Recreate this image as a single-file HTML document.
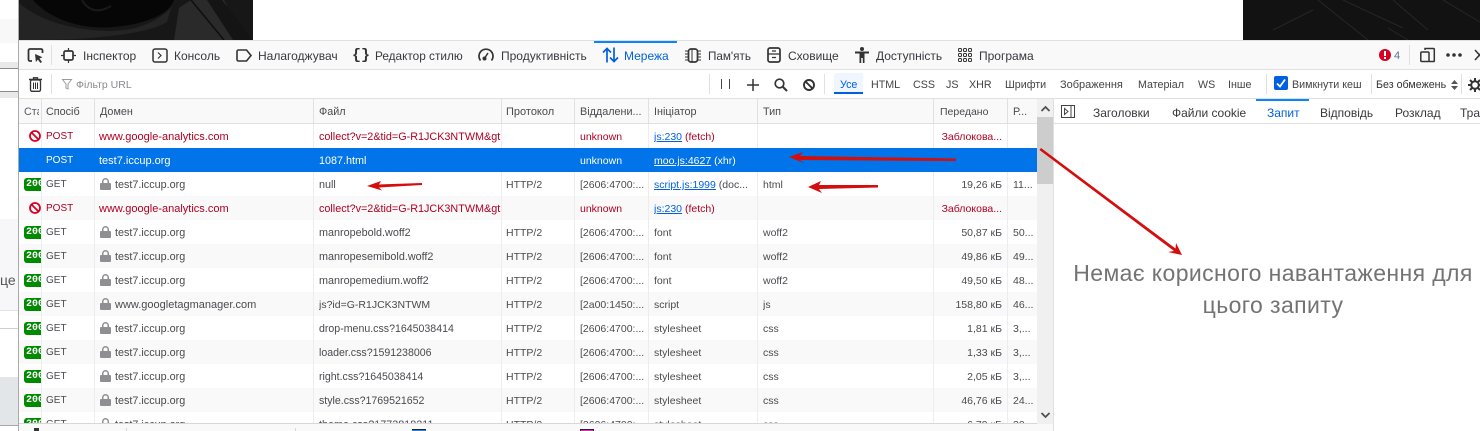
<!DOCTYPE html>
<html lang="uk"><head><meta charset="utf-8"><title>Мережа</title>
<style>
html,body{margin:0;padding:0;width:1480px;height:431px;overflow:hidden;background:#fff}
body{position:relative;font:12px "Liberation Sans","Noto Sans CJK SC",sans-serif;color:#38383d}
.a{position:absolute}
svg{position:absolute;overflow:visible}
.t{position:absolute;white-space:nowrap;top:41px;height:28px;line-height:31px;font-size:12px;color:#38383d}
.f{position:absolute;white-space:nowrap;top:70px;height:28px;line-height:31px;font-size:10.7px;color:#444}
.h{position:absolute;white-space:nowrap;top:99px;height:24px;line-height:27px;font-size:10.8px;color:#4a4a4f}
.p{position:absolute;white-space:nowrap;top:99px;height:24px;line-height:28px;font-size:12px;color:#38383d}
.r{position:absolute;left:0;width:1018px;height:24px;line-height:26px;font-size:10.5px;color:#4a4a4f}
.r span{position:absolute;white-space:nowrap;overflow:hidden;top:0}
.r u{color:#0060df}
.e,.e u{color:#b00020}.e u{color:#0060df}
.s,.s u{color:#fff}
.g{background:#f9f9fa}
.m{left:27px;font-size:10px}.d{left:80px;width:210px;font-size:11px}.dl{left:96px;width:195px;font-size:10.8px}.n{left:300px;width:182px;font-size:10.8px}.o{left:487px}.q{left:561px;width:70px}.i{left:635px;width:104px}.y{left:744px}.x{left:850px;width:133px;text-align:right}.z{left:994px;width:24px}
.b{position:absolute;left:5px;top:6px;width:17px;height:13px;background:#008a00;border-radius:3px 0 0 3px;overflow:hidden;color:#fff;font:bold 10px/13px "Liberation Mono",monospace;padding-left:2px;box-sizing:border-box}
.l{position:absolute;left:81px;top:6px;width:11px;height:12px}
.v{position:absolute;top:0;width:1px;height:300px;background:#ededf0}
</style></head><body>

<!-- left page sliver -->
<div class="a" style="left:0;top:19px;width:18px;height:24px;background:#f8f8f8"></div>
<div class="a" style="left:0;top:62px;width:18px;height:6px;background:#e9e9e9"></div>
<div class="a" style="left:0;top:68px;width:18px;height:1px;background:#8a8a8a"></div>
<div class="a" style="left:0;top:91px;width:18px;height:1px;background:#8a8a8a"></div>
<div class="a" style="left:0;top:92px;width:18px;height:6px;background:#e9e9e9"></div>
<div class="a" style="left:0;top:219px;width:18px;height:91px;background:#f7f7f9"></div>
<div class="a" style="left:0;top:310px;width:18px;height:1px;background:#e3e3e3"></div>
<div class="a" style="left:0;top:328px;width:18px;height:1px;background:#cfcfcf"></div>
<div class="a" style="left:0;top:377px;width:18px;height:48px;background:#e3e6e9"></div>
<div class="a" style="left:0;top:425px;width:18px;height:1px;background:#a8a8a8"></div>
<div class="a" style="left:0;top:270px;font-size:14px;line-height:20px;color:#555;white-space:nowrap">це</div>
<div class="a" style="left:18px;top:0;width:1px;height:431px;background:#a9a9a9"></div>

<!-- dark images -->
<svg style="left:19px;top:0" width="234" height="40" viewBox="0 0 234 40">
<rect width="234" height="40" fill="#171717"/>
<path d="M0 0H155C150 14 128 24 95 27C60 30 30 18 14 0Z" fill="#060606"/>
<path d="M0 3C20 20 50 30 90 31C120 31 140 20 152 8L148 22C125 36 60 40 20 40H0Z" fill="#242424"/>
<path d="M160 8L172 0H205L225 40H155Z" fill="#2a2a2a"/>
<path d="M172 0L205 40" stroke="#0e0e0e" stroke-width="1.500" fill="none"/>
<path d="M203 0L234 40H214L188 0Z" fill="#141414"/>
<path d="M63 0C70 12 80 13 92 6" stroke="#1a1a1a" stroke-width="2" fill="none"/>
</svg>
<svg style="left:1243px;top:0" width="237" height="40" viewBox="0 0 237 40">
<rect width="237" height="40" fill="#121212"/>
<path d="M75 0L125 40M100 0L160 28M150 0L185 30M200 0L237 22M145 28L165 40M30 30L70 10" stroke="#262626" stroke-width="1" fill="none"/>
</svg>

<!-- toolbar backgrounds -->
<div class="a" style="left:19px;top:40px;width:1461px;height:1px;background:#e0e0e1"></div>
<div class="a" style="left:19px;top:41px;width:1461px;height:28px;background:#f9f9fa"></div>
<div class="a" style="left:19px;top:69px;width:1461px;height:1px;background:#e0e0e1"></div>
<div class="a" style="left:19px;top:70px;width:1461px;height:28px;background:#fff"></div>
<div class="a" style="left:19px;top:98px;width:1461px;height:1px;background:#e0e0e1"></div>
<div class="a" style="left:19px;top:99px;width:1018px;height:24px;background:#f9f9fa"></div>
<div class="a" style="left:19px;top:123px;width:1018px;height:1px;background:#e0e0e1"></div>
<div class="a" style="left:1054px;top:123px;width:426px;height:1px;background:#e0e0e1"></div>

<!-- top tabs icons -->
<svg style="left:27px;top:47px" width="18" height="18" viewBox="0 0 18 18" fill="none" stroke="#333" stroke-width="1.800"><path d="M5 14H3a1.500 1.500 0 0 1-1.500-1.500V3.500A1.500 1.500 0 0 1 3 2h11a1.500 1.500 0 0 1 1.500 1.500V6"/><path d="M8 7l7.500 3.200-3 1.300 2.500 3.500-1.600 1-2.500-3.400-2 2.400Z" fill="#333" stroke="none"/></svg>
<div class="a" style="left:51px;top:45px;width:1px;height:20px;background:#e0e0e1"></div>
<svg style="left:61px;top:48px" width="15" height="15" viewBox="0 0 15 15" fill="none" stroke="#333" stroke-width="1.700"><rect x="3" y="3" width="9" height="9" rx="1.500"/><path d="M7.500 0V3M7.500 12V15M0 7.500H3M12 7.500H15" stroke-width="1.200"/></svg>
<div class="t" style="left:83px">Інспектор</div>
<svg style="left:152px;top:48px" width="16" height="15" viewBox="0 0 16 15" fill="none" stroke="#333" stroke-width="1.500"><rect x="1" y="1" width="14" height="13" rx="2"/><path d="M6 4.500L9 7.500L6 10.500" stroke-width="1.200"/></svg>
<div class="t" style="left:174px">Консоль</div>
<svg style="left:236px;top:49px" width="16" height="13" viewBox="0 0 16 13" fill="none" stroke="#333" stroke-width="1.600"><path d="M2.500 1H10.500L15 6.500L10.500 12H2.500A1.500 1.500 0 0 1 1 10.500V2.500A1.500 1.500 0 0 1 2.500 1Z"/></svg>
<div class="t" style="left:258px">Налагоджувач</div>
<div class="a" style="left:352px;top:47px;font:bold 15px/17px 'Liberation Mono',monospace;color:#333">{</div>
<div class="a" style="left:361px;top:47px;font:bold 15px/17px 'Liberation Mono',monospace;color:#333">}</div>
<div class="t" style="left:375px;font-size:11.800px">Редактор стилю</div>
<svg style="left:478px;top:47px" width="16" height="15" viewBox="0 0 16 15" fill="none" stroke="#333" stroke-width="1.700"><path d="M2.500 13.500A7 7 0 1 1 13.500 13.500"/><path d="M6 12L10 6" stroke-width="1.500"/><circle cx="6.500" cy="11.500" r="2" fill="#333" stroke="none"/></svg>
<div class="t" style="left:501px">Продуктивність</div>
<div class="a" style="left:594px;top:41px;width:83px;height:2px;background:#0a84ff"></div>
<svg style="left:602px;top:47px" width="17" height="16" viewBox="0 0 17 16" fill="none" stroke="#0060df" stroke-width="1.700"><path d="M5 15.500V1.500M1 5.500L5 1.500L9 5.500"/><path d="M12 .5V14.500M8 10.500L12 14.500L16 10.500"/></svg>
<div class="t" style="left:624px;color:#0060df">Мережа</div>
<svg style="left:685px;top:48px" width="16" height="15" viewBox="0 0 16 15" fill="none" stroke="#333"><rect x="3.500" y="1" width="9" height="13" rx="2.500" stroke-width="1.700"/><path d="M0 3H3M0 6H3M0 9H3M0 12H3M13 3H16M13 6H16M13 9H16M13 12H16" stroke-width="1"/><path d="M7 1V14" stroke-width="1"/></svg>
<div class="t" style="left:708px;font-size:11.700px">Пам'ять</div>
<svg style="left:767px;top:47px" width="14" height="16" viewBox="0 0 14 16" fill="none" stroke="#333" stroke-width="1.700"><rect x="1" y="1" width="12" height="14" rx="2"/><path d="M1 7H13M5 4H9M5 10.500H9" stroke-width="1.200"/></svg>
<div class="t" style="left:788px">Сховище</div>
<svg style="left:855px;top:47px" width="14" height="16" viewBox="0 0 14 16" fill="#333"><circle cx="7" cy="2" r="2"/><path d="M0 4.500H14V6.500H9.500V16H7.800V11H6.200V16H4.500V6.500H0Z"/></svg>
<div class="t" style="left:876px">Доступність</div>
<svg style="left:958px;top:48px" width="14" height="14" viewBox="0 0 14 14" fill="none" stroke="#333" stroke-width="1"><rect x=".5" y=".5" width="3" height="3" rx="1"/><rect x="5.500" y=".5" width="3" height="3" rx="1"/><rect x="10.500" y=".5" width="3" height="3" rx="1"/><rect x=".5" y="5.500" width="3" height="3" rx="1"/><rect x="5.500" y="5.500" width="3" height="3" rx="1"/><rect x="10.500" y="5.500" width="3" height="3" rx="1"/><rect x=".5" y="10.500" width="3" height="3" rx="1"/><rect x="5.500" y="10.500" width="3" height="3" rx="1"/><rect x="10.500" y="10.500" width="3" height="3" rx="1"/></svg>
<div class="t" style="left:979px">Програма</div>

<!-- top right -->
<svg style="left:1379px;top:49px" width="12" height="12" viewBox="0 0 12 12"><circle cx="6" cy="6" r="6" fill="#d70022"/><rect x="5" y="2" width="2" height="5" fill="#fff"/><rect x="5" y="8" width="2" height="2" fill="#fff"/></svg>
<div class="t" style="left:1394px;color:#5b6f8f;font-size:11px">4</div>
<div class="a" style="left:1409px;top:45px;width:1px;height:20px;background:#e0e0e1"></div>
<svg style="left:1420px;top:47px" width="15" height="16" viewBox="0 0 15 16" fill="none" stroke="#333" stroke-width="1.500"><path d="M5 3V1.500H13.500A.8.800 0 0 1 14.300 2.300V13.700A.8.800 0 0 1 13.500 14.500H9"/><rect x=".8" y="5" width="8.200" height="9.500" rx="1"/></svg>
<svg style="left:1446px;top:53px" width="16" height="4" viewBox="0 0 16 4" fill="#333"><circle cx="2" cy="2" r="1.800"/><circle cx="8" cy="2" r="1.800"/><circle cx="14" cy="2" r="1.800"/></svg>
<svg style="left:1475px;top:50px" width="5" height="10" viewBox="0 0 5 10" fill="none" stroke="#333" stroke-width="1.500"><path d="M0 0L9 10M9 0L0 10"/></svg>

<!-- filter bar -->
<svg style="left:29px;top:77px" width="13" height="15" viewBox="0 0 13 15" fill="none" stroke="#333" stroke-width="1.300"><path d="M0 2.500H13" stroke-width="1.500"/><path d="M4.500 2V.8H8.500V2"/><rect x="1.500" y="3" width="10" height="11.300" rx="1.500"/><path d="M4.500 5.500V12M6.500 5.500V12M8.500 5.500V12" stroke-width="1"/></svg>
<div class="a" style="left:51px;top:74px;width:1px;height:20px;background:#e0e0e1"></div>
<svg style="left:62px;top:79px" width="10" height="11" viewBox="0 0 10 11" fill="none" stroke="#999"><path d="M.5 .5H9.500L6 5V10L4 9V5Z"/></svg>
<div class="f" style="left:76px;color:#8a8a8f;font-size:10.500px">Фільтр URL</div>
<div class="a" style="left:709px;top:74px;width:1px;height:20px;background:#e0e0e1"></div>
<div class="a" style="left:721px;top:79px;width:1px;height:10px;background:#444"></div>
<div class="a" style="left:729px;top:79px;width:1px;height:10px;background:#444"></div>
<svg style="left:747px;top:79px" width="12" height="12" viewBox="0 0 12 12" stroke="#333" stroke-width="1.500"><path d="M6 0V12M0 6H12"/></svg>
<svg style="left:774px;top:78px" width="14" height="14" viewBox="0 0 14 14" fill="none" stroke="#333" stroke-width="1.700"><circle cx="5.500" cy="5.500" r="4.300"/><path d="M8.500 8.500L13 13" stroke-width="2"/></svg>
<svg style="left:803px;top:79px" width="12" height="12" viewBox="0 0 12 12" fill="none" stroke="#333" stroke-width="1.900"><circle cx="6" cy="6" r="5"/><path d="M2.500 2.500L9.500 9.500"/></svg>
<div class="a" style="left:824px;top:74px;width:1px;height:20px;background:#e0e0e1"></div>
<div class="a" style="left:834px;top:73px;width:29px;height:19px;background:#f0f6ff;border-bottom:2px solid #0060df;border-radius:2px 2px 0 0"></div>
<div class="f" style="left:840px;color:#0060df">Усе</div>
<div class="f" style="left:871px">HTML</div>
<div class="f" style="left:913px">CSS</div>
<div class="f" style="left:946px">JS</div>
<div class="f" style="left:969px">XHR</div>
<div class="f" style="left:1005px">Шрифти</div>
<div class="f" style="left:1060px;font-size:11px">Зображення</div>
<div class="f" style="left:1138px">Матеріал</div>
<div class="f" style="left:1198px">WS</div>
<div class="f" style="left:1228px">Інше</div>
<div class="a" style="left:1266px;top:74px;width:1px;height:20px;background:#e0e0e1"></div>
<svg style="left:1274px;top:76px" width="14" height="14" viewBox="0 0 14 14"><rect width="14" height="14" rx="2" fill="#0060df"/><path d="M3 7.500L6 10.500L11 3.500" fill="none" stroke="#fff" stroke-width="1.800"/></svg>
<div class="f" style="left:1292px">Вимкнути кеш</div>
<div class="a" style="left:1371px;top:74px;width:1px;height:20px;background:#e0e0e1"></div>
<div class="f" style="left:1376px;color:#333">Без обмежень</div>
<svg style="left:1451px;top:80px" width="7" height="10" viewBox="0 0 7 10" fill="#555"><path d="M3.500 0L7 4H0ZM3.500 10L0 6H7Z"/></svg>
<div class="a" style="left:1461px;top:74px;width:1px;height:20px;background:#e0e0e1"></div>
<svg style="left:1468px;top:78px" width="14" height="14" viewBox="0 0 14 14" fill="none" stroke="#333"><circle cx="7" cy="7" r="3.800" stroke-width="2"/><path d="M7 0V3M7 11V14M0 7H3M11 7H14M2 2L4 4M10 10L12 12M12 2L10 4M4 10L2 12" stroke-width="2"/></svg>

<!-- table header -->
<div class="h" style="left:24px;width:15px;overflow:hidden;color:#5a5a6a">Стан</div>
<div class="h" style="left:46px">Спосіб</div>
<div class="h" style="left:100px">Домен</div>
<div class="h" style="left:319px">Файл</div>
<div class="h" style="left:506px;font-size:11px">Протокол</div>
<div class="h" style="left:580px">Віддалени...</div>
<div class="h" style="left:654px">Ініціатор</div>
<div class="h" style="left:763px">Тип</div>
<div class="h" style="left:940px;font-size:10.500px">Передано</div>
<div class="h" style="left:1013px">Р...</div>
<div class="a" style="left:41px;top:99px;width:1px;height:24px;background:#e0e0e1"></div>
<div class="a" style="left:94px;top:99px;width:1px;height:24px;background:#e0e0e1"></div>
<div class="a" style="left:313px;top:99px;width:1px;height:24px;background:#e0e0e1"></div>
<div class="a" style="left:501px;top:99px;width:1px;height:24px;background:#e0e0e1"></div>
<div class="a" style="left:574px;top:99px;width:1px;height:24px;background:#e0e0e1"></div>
<div class="a" style="left:648px;top:99px;width:1px;height:24px;background:#e0e0e1"></div>
<div class="a" style="left:757px;top:99px;width:1px;height:24px;background:#e0e0e1"></div>
<div class="a" style="left:933px;top:99px;width:1px;height:24px;background:#e0e0e1"></div>
<div class="a" style="left:1007px;top:99px;width:1px;height:24px;background:#e0e0e1"></div>

<!-- table body -->
<div class="a" style="left:19px;top:124px;width:1018px;height:299px;overflow:hidden;background:#fff">
<div class="a g" style="left:0;top:72px;width:1018px;height:24px"></div>
<div class="a g" style="left:0;top:120px;width:1018px;height:24px"></div>
<div class="a g" style="left:0;top:168px;width:1018px;height:24px"></div>
<div class="a g" style="left:0;top:216px;width:1018px;height:24px"></div>
<div class="a g" style="left:0;top:264px;width:1018px;height:24px"></div>
<div class="v" style="left:22px"></div><div class="v" style="left:75px"></div><div class="v" style="left:294px"></div><div class="v" style="left:482px"></div><div class="v" style="left:555px"></div><div class="v" style="left:629px"></div><div class="v" style="left:738px"></div><div class="v" style="left:914px"></div><div class="v" style="left:988px"></div>
<div class="a" style="left:0;top:24px;width:1018px;height:24px;background:#0074e8"></div>

<div class="r e" style="top:0"><svg style="left:10px;top:6px" width="12" height="12" viewBox="0 0 12 12" fill="none" stroke="#d70022" stroke-width="1.800"><circle cx="6" cy="6" r="5"/><path d="M2.500 2.500L9.500 9.500"/></svg><span class="m">POST</span><span class="d">www.google-analytics.com</span><span class="n">collect?v=2&amp;tid=G-R1JCK3NTWM&amp;gtm=45</span><span class="q">unknown</span><span class="i"><u>js:230</u> (fetch)</span><span class="x">Заблокова...</span></div>
<div class="r s" style="top:24px"><span class="m">POST</span><span class="d">test7.iccup.org</span><span class="n">1087.html</span><span class="q">unknown</span><span class="i"><u>moo.js:4627</u> (xhr)</span></div>
<div class="r" style="top:48px"><div class="b">200</div><span class="m">GET</span><svg class="l" viewBox="0 0 11 12"><path d="M2 5V3.500a3.500 3.500 0 0 1 7 0V5h1a1 1 0 0 1 1 1v5a1 1 0 0 1-1 1H1a1 1 0 0 1-1-1V6a1 1 0 0 1 1-1ZM3.500 5h4V3.500a2 2 0 0 0-4 0Z" fill="#8f8f93" fill-rule="evenodd"/></svg><span class="dl">test7.iccup.org</span><span class="n">null</span><span class="o">HTTP/2</span><span class="q">[2606:4700:...</span><span class="i"><u>script.js:1999</u> (doc...</span><span class="y">html</span><span class="x">19,26 кБ</span><span class="z">11...</span></div>
<div class="r e" style="top:72px"><svg style="left:10px;top:6px" width="12" height="12" viewBox="0 0 12 12" fill="none" stroke="#d70022" stroke-width="1.800"><circle cx="6" cy="6" r="5"/><path d="M2.500 2.500L9.500 9.500"/></svg><span class="m">POST</span><span class="d">www.google-analytics.com</span><span class="n">collect?v=2&amp;tid=G-R1JCK3NTWM&amp;gtm=45</span><span class="q">unknown</span><span class="i"><u>js:230</u> (fetch)</span><span class="x">Заблокова...</span></div>
<div class="r" style="top:96px"><div class="b">200</div><span class="m">GET</span><svg class="l" viewBox="0 0 11 12"><path d="M2 5V3.500a3.500 3.500 0 0 1 7 0V5h1a1 1 0 0 1 1 1v5a1 1 0 0 1-1 1H1a1 1 0 0 1-1-1V6a1 1 0 0 1 1-1ZM3.500 5h4V3.500a2 2 0 0 0-4 0Z" fill="#8f8f93" fill-rule="evenodd"/></svg><span class="dl">test7.iccup.org</span><span class="n">manropebold.woff2</span><span class="o">HTTP/2</span><span class="q">[2606:4700:...</span><span class="i">font</span><span class="y">woff2</span><span class="x">50,87 кБ</span><span class="z">50...</span></div>
<div class="r" style="top:120px"><div class="b">200</div><span class="m">GET</span><svg class="l" viewBox="0 0 11 12"><path d="M2 5V3.500a3.500 3.500 0 0 1 7 0V5h1a1 1 0 0 1 1 1v5a1 1 0 0 1-1 1H1a1 1 0 0 1-1-1V6a1 1 0 0 1 1-1ZM3.500 5h4V3.500a2 2 0 0 0-4 0Z" fill="#8f8f93" fill-rule="evenodd"/></svg><span class="dl">test7.iccup.org</span><span class="n">manropesemibold.woff2</span><span class="o">HTTP/2</span><span class="q">[2606:4700:...</span><span class="i">font</span><span class="y">woff2</span><span class="x">49,86 кБ</span><span class="z">49...</span></div>
<div class="r" style="top:144px"><div class="b">200</div><span class="m">GET</span><svg class="l" viewBox="0 0 11 12"><path d="M2 5V3.500a3.500 3.500 0 0 1 7 0V5h1a1 1 0 0 1 1 1v5a1 1 0 0 1-1 1H1a1 1 0 0 1-1-1V6a1 1 0 0 1 1-1ZM3.500 5h4V3.500a2 2 0 0 0-4 0Z" fill="#8f8f93" fill-rule="evenodd"/></svg><span class="dl">test7.iccup.org</span><span class="n">manropemedium.woff2</span><span class="o">HTTP/2</span><span class="q">[2606:4700:...</span><span class="i">font</span><span class="y">woff2</span><span class="x">49,50 кБ</span><span class="z">48...</span></div>
<div class="r" style="top:168px"><div class="b">200</div><span class="m">GET</span><svg class="l" viewBox="0 0 11 12"><path d="M2 5V3.500a3.500 3.500 0 0 1 7 0V5h1a1 1 0 0 1 1 1v5a1 1 0 0 1-1 1H1a1 1 0 0 1-1-1V6a1 1 0 0 1 1-1ZM3.500 5h4V3.500a2 2 0 0 0-4 0Z" fill="#8f8f93" fill-rule="evenodd"/></svg><span class="dl" style="font-size:11px">www.googletagmanager.com</span><span class="n" style="font-size:10.500px">js?id=G-R1JCK3NTWM</span><span class="o">HTTP/2</span><span class="q">[2a00:1450:...</span><span class="i">script</span><span class="y">js</span><span class="x">158,80 кБ</span><span class="z">46...</span></div>
<div class="r" style="top:192px"><div class="b">200</div><span class="m">GET</span><svg class="l" viewBox="0 0 11 12"><path d="M2 5V3.500a3.500 3.500 0 0 1 7 0V5h1a1 1 0 0 1 1 1v5a1 1 0 0 1-1 1H1a1 1 0 0 1-1-1V6a1 1 0 0 1 1-1ZM3.500 5h4V3.500a2 2 0 0 0-4 0Z" fill="#8f8f93" fill-rule="evenodd"/></svg><span class="dl">test7.iccup.org</span><span class="n" style="font-size:10.600px">drop-menu.css?1645038414</span><span class="o">HTTP/2</span><span class="q">[2606:4700:...</span><span class="i">stylesheet</span><span class="y">css</span><span class="x">1,81 кБ</span><span class="z">3,...</span></div>
<div class="r" style="top:216px"><div class="b">200</div><span class="m">GET</span><svg class="l" viewBox="0 0 11 12"><path d="M2 5V3.500a3.500 3.500 0 0 1 7 0V5h1a1 1 0 0 1 1 1v5a1 1 0 0 1-1 1H1a1 1 0 0 1-1-1V6a1 1 0 0 1 1-1ZM3.500 5h4V3.500a2 2 0 0 0-4 0Z" fill="#8f8f93" fill-rule="evenodd"/></svg><span class="dl">test7.iccup.org</span><span class="n" style="font-size:10.600px">loader.css?1591238006</span><span class="o">HTTP/2</span><span class="q">[2606:4700:...</span><span class="i">stylesheet</span><span class="y">css</span><span class="x">1,33 кБ</span><span class="z">3,...</span></div>
<div class="r" style="top:240px"><div class="b">200</div><span class="m">GET</span><svg class="l" viewBox="0 0 11 12"><path d="M2 5V3.500a3.500 3.500 0 0 1 7 0V5h1a1 1 0 0 1 1 1v5a1 1 0 0 1-1 1H1a1 1 0 0 1-1-1V6a1 1 0 0 1 1-1ZM3.500 5h4V3.500a2 2 0 0 0-4 0Z" fill="#8f8f93" fill-rule="evenodd"/></svg><span class="dl">test7.iccup.org</span><span class="n" style="font-size:10.600px">right.css?1645038414</span><span class="o">HTTP/2</span><span class="q">[2606:4700:...</span><span class="i">stylesheet</span><span class="y">css</span><span class="x">2,05 кБ</span><span class="z">3,...</span></div>
<div class="r" style="top:264px"><div class="b">200</div><span class="m">GET</span><svg class="l" viewBox="0 0 11 12"><path d="M2 5V3.500a3.500 3.500 0 0 1 7 0V5h1a1 1 0 0 1 1 1v5a1 1 0 0 1-1 1H1a1 1 0 0 1-1-1V6a1 1 0 0 1 1-1ZM3.500 5h4V3.500a2 2 0 0 0-4 0Z" fill="#8f8f93" fill-rule="evenodd"/></svg><span class="dl">test7.iccup.org</span><span class="n" style="font-size:10.600px">style.css?1769521652</span><span class="o">HTTP/2</span><span class="q">[2606:4700:...</span><span class="i">stylesheet</span><span class="y">css</span><span class="x">46,76 кБ</span><span class="z">24...</span></div>
<div class="r" style="top:288px"><div class="b">200</div><span class="m">GET</span><svg class="l" viewBox="0 0 11 12"><path d="M2 5V3.500a3.500 3.500 0 0 1 7 0V5h1a1 1 0 0 1 1 1v5a1 1 0 0 1-1 1H1a1 1 0 0 1-1-1V6a1 1 0 0 1 1-1ZM3.500 5h4V3.500a2 2 0 0 0-4 0Z" fill="#8f8f93" fill-rule="evenodd"/></svg><span class="dl">test7.iccup.org</span><span class="n">theme.css?1773818211</span><span class="o">HTTP/2</span><span class="q">[2606:4700:...</span><span class="i">stylesheet</span><span class="y">css</span><span class="x">6,79 кБ</span><span class="z">30...</span></div>
</div>

<!-- status bar -->
<div class="a" style="left:19px;top:423px;width:1034px;height:1px;background:#d7d7db"></div>
<div class="a" style="left:19px;top:424px;width:1034px;height:7px;background:#f9f9fa"></div>
<div class="a" style="left:34px;top:428px;width:5px;height:3px;background:#333"></div>
<div class="a" style="left:126px;top:428px;width:1px;height:3px;background:#d7d7db"></div>
<div class="a" style="left:295px;top:428px;width:1px;height:3px;background:#d7d7db"></div>
<div class="a" style="left:412px;top:429px;width:14px;height:2px;background:#2484e8;border-top:1px solid #222"></div>
<div class="a" style="left:580px;top:429px;width:12px;height:2px;background:#e22bb8;border:1px solid #222;border-bottom:0"></div>

<!-- scrollbar -->
<div class="a" style="left:1037px;top:99px;width:16px;height:325px;background:#f0f0f0"></div>
<div class="a" style="left:1037px;top:117px;width:16px;height:67px;background:#cdcdcd"></div>
<svg style="left:1041px;top:106px" width="9" height="6" viewBox="0 0 9 6" fill="none" stroke="#505050" stroke-width="1.800"><path d="M.5 5L4.500 1L8.500 5"/></svg>
<svg style="left:1041px;top:412px" width="9" height="6" viewBox="0 0 9 6" fill="none" stroke="#505050" stroke-width="1.800"><path d="M.5 1L4.500 5L8.500 1"/></svg>
<div class="a" style="left:1053px;top:99px;width:1px;height:332px;background:#e0e0e1"></div>

<!-- right panel -->
<svg style="left:1061px;top:105px" width="14" height="13" viewBox="0 0 14 13" fill="none" stroke="#444" stroke-width="1"><rect x=".5" y=".5" width="13" height="12"/><path d="M10 .5V12.500"/><path d="M3.500 3.500L7 6.500L3.500 9.500Z"/></svg>
<div class="p" style="left:1093px">Заголовки</div>
<div class="p" style="left:1172px">Файли cookie</div>
<div class="a" style="left:1256px;top:99px;width:53px;height:2px;background:#0a84ff"></div>
<div class="p" style="left:1267px;color:#0060df">Запит</div>
<div class="p" style="left:1320px">Відповідь</div>
<div class="p" style="left:1395px">Розклад</div>
<div class="p" style="left:1460px">Тра</div>
<div class="a" style="left:1073px;top:257px;width:400px;text-align:center;font-size:23px;letter-spacing:.4px;line-height:32px;color:#737373;white-space:nowrap">Немає корисного навантаження для<br>цього запиту</div>

<!-- red annotation arrows -->
<svg style="left:0;top:0" width="1480" height="431" viewBox="0 0 1480 431" fill="#d40d0d">
<path d="M789 157L803 152L800 156L956 158.500V161L800 160L804 163Z"/>
<path d="M367 186L381 181L379 184.500L422 183V185L379 187.500L382 190.500Z"/>
<path d="M808 187L821 181L819 185L878 185V187.500L819 189L822 193Z"/>
<path d="M1041 148L1039.500 150L1174 251L1168 252L1182 255L1176 243L1175.500 248.500Z"/>
</svg>
</body></html>
